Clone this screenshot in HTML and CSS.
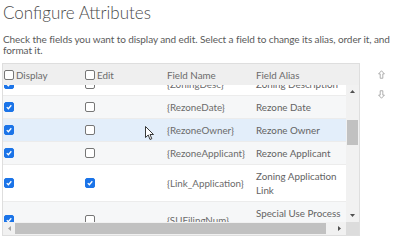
FILE: index.html
```html
<!DOCTYPE html>
<html>
<head>
<meta charset="utf-8">
<link rel="stylesheet" href="styles.css">
</head>
<body>
<div class="page">
  <h1 class="title">Configure Attributes</h1>
  <p class="desc">Check the fields you want to display and edit. Select a field to change its alias, order it, and format it.</p>
  <div class="panel">
    <div class="table">
      <div class="thead">
        <div class="hcell"><span class="cb"></span>Display</div>
        <div class="hcell"><span class="cb"></span>Edit</div>
        <div class="hcell">Field Name</div>
        <div class="hcell">Field Alias</div>
      </div>
      <div class="tbody">
        <div class="viewport">
          <div class="rows">
            <div class="row">
              <div class="cell"><span class="cb on"><svg viewBox="0 0 10 10"><path d="M2.2 5.2 L4.2 7.2 L7.9 2.8"/></svg></span></div>
              <div class="cell"><span class="cb"></span></div>
              <div class="cell name">{ZoningDesc}</div>
              <div class="cell alias">Zoning Description</div>
            </div>
            <div class="row alt">
              <div class="cell"><span class="cb on"><svg viewBox="0 0 10 10"><path d="M2.2 5.2 L4.2 7.2 L7.9 2.8"/></svg></span></div>
              <div class="cell"><span class="cb"></span></div>
              <div class="cell name">{RezoneDate}</div>
              <div class="cell alias">Rezone Date</div>
            </div>
            <div class="row sel">
              <div class="cell"><span class="cb on"><svg viewBox="0 0 10 10"><path d="M2.2 5.2 L4.2 7.2 L7.9 2.8"/></svg></span></div>
              <div class="cell"><span class="cb"></span></div>
              <div class="cell name">{RezoneOwner}</div>
              <div class="cell alias">Rezone Owner</div>
            </div>
            <div class="row alt">
              <div class="cell"><span class="cb on"><svg viewBox="0 0 10 10"><path d="M2.2 5.2 L4.2 7.2 L7.9 2.8"/></svg></span></div>
              <div class="cell"><span class="cb"></span></div>
              <div class="cell name">{RezoneApplicant}</div>
              <div class="cell alias">Rezone Applicant</div>
            </div>
            <div class="row">
              <div class="cell"><span class="cb on"><svg viewBox="0 0 10 10"><path d="M2.2 5.2 L4.2 7.2 L7.9 2.8"/></svg></span></div>
              <div class="cell"><span class="cb on"><svg viewBox="0 0 10 10"><path d="M2.2 5.2 L4.2 7.2 L7.9 2.8"/></svg></span></div>
              <div class="cell name">{Link_Application}</div>
              <div class="cell alias">Zoning Application Link</div>
            </div>
            <div class="row alt">
              <div class="cell"><span class="cb on"><svg viewBox="0 0 10 10"><path d="M2.2 5.2 L4.2 7.2 L7.9 2.8"/></svg></span></div>
              <div class="cell"><span class="cb"></span></div>
              <div class="cell name">{SUFilingNum}</div>
              <div class="cell alias">Special Use Process Filing Number</div>
            </div>
          </div>
        </div>
        <div class="vbar">
          <div class="sbtn"><svg viewBox="0 0 5 3"><path d="M0 3 L2.5 0 L5 3 Z"/></svg></div>
          <div class="vtrack"><div class="vthumb"></div></div>
          <div class="sbtn"><svg viewBox="0 0 5 3"><path d="M0 0 L5 0 L2.5 3 Z"/></svg></div>
        </div>
        <div class="hbar">
          <div class="sbtn off"><svg viewBox="0 0 3 5"><path d="M3 0 L3 5 L0 2.5 Z"/></svg></div>
          <div class="htrack"><div class="hthumb"></div></div>
          <div class="sbtn"><svg viewBox="0 0 3 5"><path d="M0 0 L0 5 L3 2.5 Z"/></svg></div>
        </div>
        <div class="corner"></div>
      </div>
    </div>
    <div class="movers">
      <svg class="mv" viewBox="0 0 8 10"><path d="M4 0.7 L7.3 4.3 L5.5 4.3 L5.5 9.3 L2.5 9.3 L2.5 4.3 L0.7 4.3 Z"/></svg>
      <svg class="mv" viewBox="0 0 8 10"><path d="M4 9.3 L7.3 5.7 L5.5 5.7 L5.5 0.7 L2.5 0.7 L2.5 5.7 L0.7 5.7 Z"/></svg>
    </div>
  </div>
  <svg class="cursor" viewBox="0 0 10 15"><path d="M0.5 0.5 L0.5 11.5 L3.2 9 L5 13.5 L6.8 12.7 L5 8.5 L8.5 8.5 Z"/></svg>
</div>
</body>
</html>
```
FILE: styles.css
```css
html, body { margin: 0; padding: 0; background: #fff; }
body { font-family: Lato, "Open Sans", sans-serif; color: #4c4c4c; }
.page { position: relative; padding-left: 3px; width: 396px; }
.title { margin: 0; padding-top: 3px; font-size: 17px; line-height: 20px; font-weight: 300; color: #4a4a4a; }
.desc { margin: 11px 0 0; font-size: 10px; line-height: 11px; letter-spacing: -0.08px; color: #5a5a5a; width: 394px; }
.panel { display: flex; margin: 7px 0 0 -1px; }
.table { width: 358px; height: 173px; border: 1px solid #dedede; box-sizing: border-box; display: flex; flex-direction: column; }
.thead { height: 21px; flex: none; background: #efefef; display: grid; grid-template-columns: 82px 82px 89px 1fr; align-items: center; font-size: 9.8px; color: #6b6b6b; }
.hcell { display: flex; align-items: center; gap: 2px; }
.hcell:first-child { padding-left: 1px; }
.tbody { flex: 1; min-height: 0; display: grid; grid-template-columns: 1fr 13px; grid-template-rows: 1fr 13px; }
.viewport { overflow: hidden; min-width: 0; }
.rows { margin-top: -13px; width: 350px; }
.row { display: grid; grid-template-columns: 82px 82px 89px 93px; align-items: center; border-top: 1px solid #ececec; font-size: 9.8px; color: #6b6b6b; }
.row.alt { background: #f6f7f8; }
.row.sel { background: #e3eefa; }
.cell:first-child { padding-left: 1px; }
.cell { display: flex; align-items: center; }
.alias { padding: 4px 0; line-height: 14px; color: #636363; }
.name { line-height: 14px; white-space: nowrap; }
.cb { width: 10px; height: 10px; box-sizing: border-box; border: 1px solid #767676; border-radius: 2px; background: #fff; display: inline-block; flex: none; }
.cb.on { background: #1b74e8; border-color: #1b74e8; }
.cb svg { display: block; width: 8px; height: 8px; fill: none; stroke: #fff; stroke-width: 1.6; }
.vbar { background: #f1f1f1; display: flex; flex-direction: column; }
.hbar { background: #f1f1f1; display: flex; }
.corner { background: #dcdcdc; }
.sbtn { flex: none; width: 13px; height: 13px; display: flex; align-items: center; justify-content: center; }
.hbar .sbtn:first-child { width: 12px; }
.sbtn svg { width: 5px; height: 3px; fill: #505050; }
.hbar .sbtn svg { width: 3px; height: 5px; }
.sbtn.off svg { fill: #a3a3a3; }
.vtrack { flex: 1; padding-top: 22px; }
.vthumb { height: 25px; margin: 0 1px; background: #c1c1c1; }
.htrack { flex: 1; padding-top: 1px; }
.hthumb { width: 311px; height: 11px; background: #c1c1c1; }
.movers { display: flex; flex-direction: column; gap: 11px; margin: 7px 0 0 18px; }
.mv { width: 7px; height: 9px; fill: none; stroke: #9a9a9a; stroke-width: 0.9; }
.cursor { position: absolute; left: 145px; top: 126px; width: 10px; height: 15px; fill: #fff; stroke: #222; stroke-width: 0.9; }
```
